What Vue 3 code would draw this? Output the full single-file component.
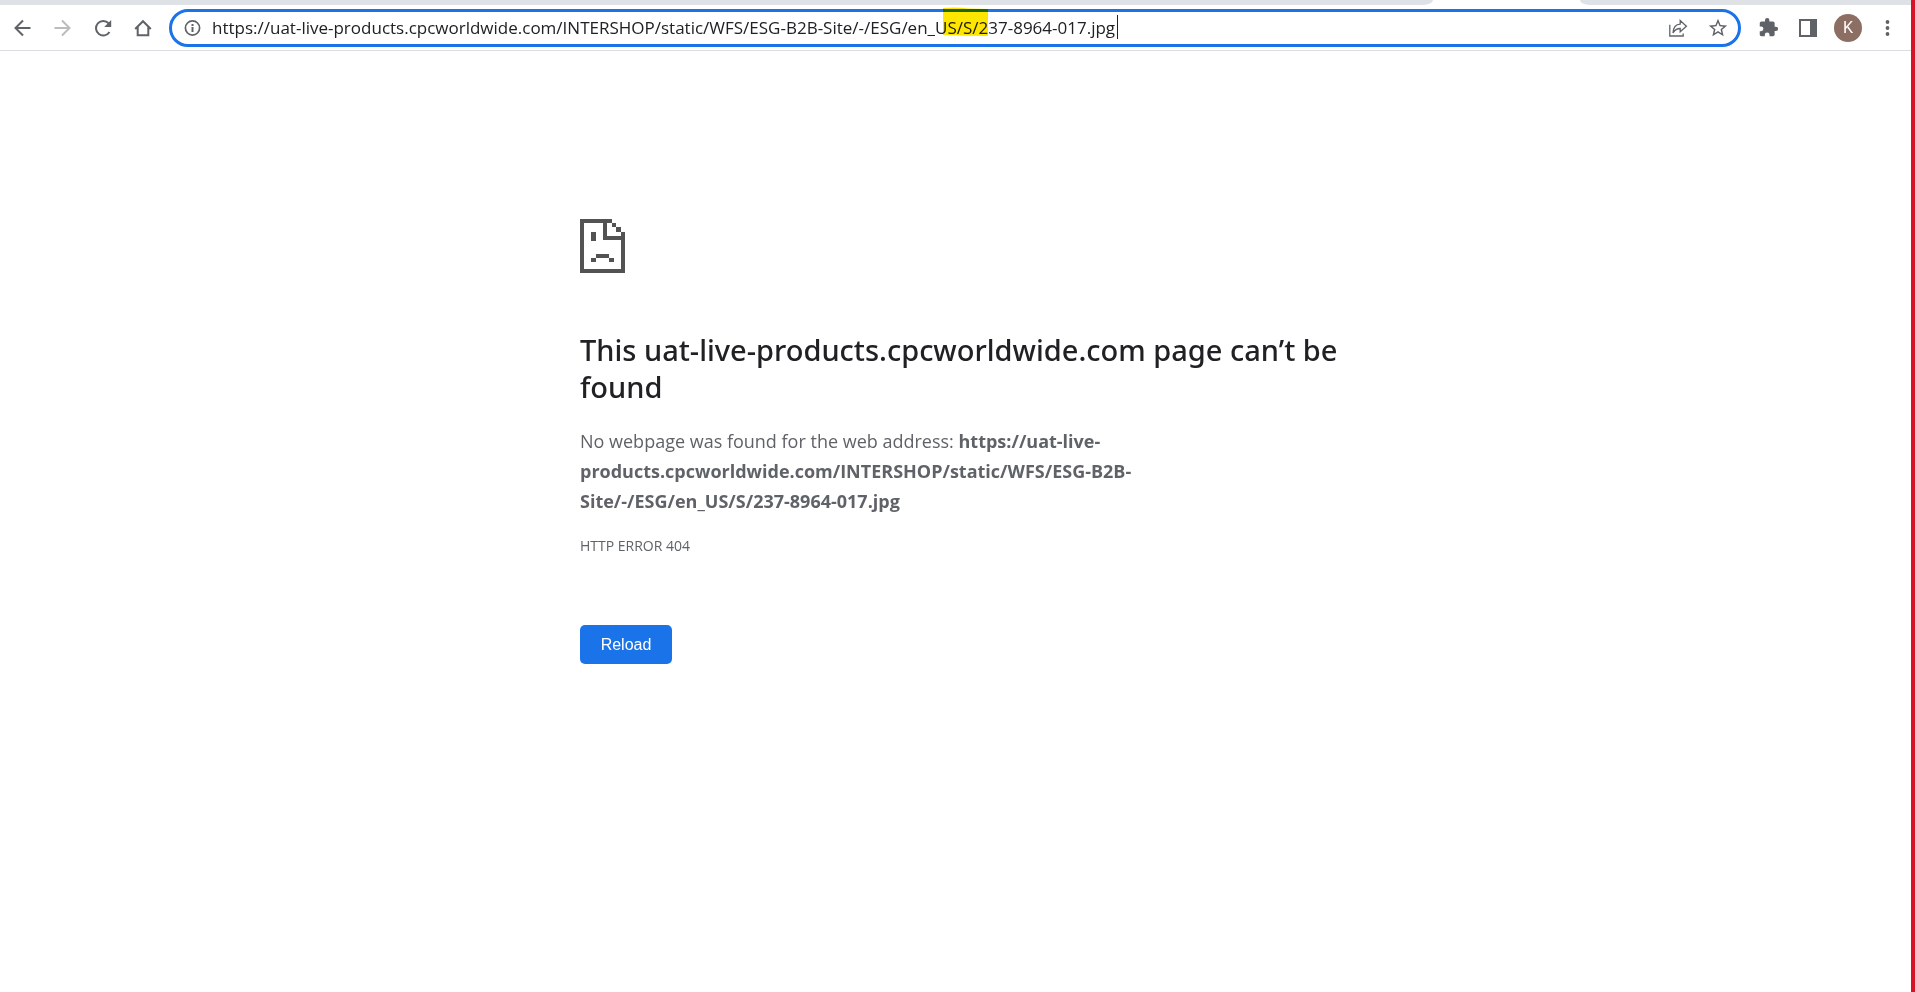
<script setup>
import { ref } from 'vue'

const address = ref('https://uat-live-products.cpcworldwide.com/INTERSHOP/static/WFS/ESG-B2B-Site/-/ESG/en_US/S/237-8964-017.jpg')
</script>

<template>
  <div class="window">
    <div class="tab-strip">
      <div class="tabs-before"></div>
      <div class="tabs-after"></div>
    </div>

    <header class="toolbar">
      <nav class="nav-buttons" aria-label="Navigation">
        <button type="button" aria-label="Back">
          <svg viewBox="0 0 24 24" width="24" height="24"><path d="M19.500 12H5M12 4.500L4.500 12L12 19.500" fill="none" stroke="#5f6368" stroke-width="2" /></svg>
        </button>
        <button type="button" aria-label="Forward" disabled>
          <svg viewBox="0 0 24 24" width="24" height="24"><path d="M3.500 12H18M11 4.500L18.500 12L11 19.500" fill="none" stroke="#babcbe" stroke-width="2" /></svg>
        </button>
        <button type="button" aria-label="Reload page">
          <svg viewBox="0 0 24 24" width="24" height="24"><path d="M18.5 16A7.3 7.3 0 1 1 17.6 7.2" fill="none" stroke="#5f6368" stroke-width="2" /><path d="M20.2 4V11H13.2Z" fill="#5f6368" /></svg>
        </button>
        <button type="button" aria-label="Home">
          <svg viewBox="0 0 24 24" width="24" height="24"><path d="M4.2 13L12 5.2L19.8 13M6.7 11V19.2H17.3V11" fill="none" stroke="#5f6368" stroke-width="2" /></svg>
        </button>
      </nav>

      <div class="omnibox">
        <svg class="info" viewBox="0 0 18 18" width="18" height="18"><circle cx="8.500" cy="9" r="7.100" fill="none" stroke="#5f6368" stroke-width="1.700" /><path d="M7.500 8h2v5h-2zM7.500 5h2v2h-2z" fill="#5f6368" /></svg>
        <div class="address">
          <input v-model="address" type="text" aria-label="Address" spellcheck="false" />
          <svg class="marker" viewBox="0 0 45 30" width="45" height="30"><path d="M0 1Q14 0 25 1.5L45 2V29Q22 29 0 28Z" fill="#ffe600" /></svg>
          <span class="caret"></span>
        </div>
        <button type="button" aria-label="Share">
          <svg viewBox="0 0 24 24" width="24" height="24"><path d="M3.8 8.8V20H17.2V17.5M7 17C7.3 11.5 10 8.4 14.2 8.2V4.6L20.4 10.3L14.2 15.8V12.5C11 12.4 8.8 14 7 17Z" fill="none" stroke="#5f6368" stroke-width="1.3" /></svg>
        </button>
        <button type="button" aria-label="Bookmark">
          <svg viewBox="0 0 24 24" width="22" height="22"><path d="M22 9.24l-7.19-.62L12 2 9.19 8.63 2 9.24l5.46 4.73L5.82 21 12 17.27 18.18 21l-1.63-7.03L22 9.24zM12 15.4l-3.76 2.27 1-4.28-3.32-2.88 4.38-.38L12 6.1l1.71 4.04 4.38.38-3.32 2.88 1 4.28L12 15.4z" fill="#5f6368" /></svg>
        </button>
      </div>

      <div class="actions">
        <button type="button" aria-label="Extensions">
          <svg viewBox="0 0 24 24" width="21" height="21"><path d="M20.5 11H19V7c0-1.1-.9-2-2-2h-4V3.5a2.5 2.5 0 0 0-5 0V5H4c-1.1 0-2 .9-2 2v3.8h1.5a2.7 2.7 0 0 1 0 5.4H2V20c0 1.1.9 2 2 2h3.8v-1.5a2.7 2.7 0 0 1 5.4 0V22H17c1.1 0 2-.9 2-2v-4h1.5a2.5 2.5 0 0 0 0-5z" fill="#5f6368" /></svg>
        </button>
        <button type="button" aria-label="Side panel">
          <svg viewBox="0 0 18 18" width="18" height="18"><path d="M0 0H18V18H0ZM2 2V16H11V2Z" fill="#5f6368" fill-rule="evenodd" /></svg>
        </button>
        <button type="button" aria-label="Profile"><span class="avatar">K</span></button>
        <button type="button" aria-label="Menu">
          <svg viewBox="0 0 18 18" width="18" height="18"><g fill="#5f6368"><circle cx="8.5" cy="3" r="1.9" /><circle cx="8.5" cy="9" r="1.9" /><circle cx="8.5" cy="15" r="1.9" /></g></svg>
        </button>
      </div>
    </header>

    <main class="error-page">
      <svg class="sad-page" viewBox="0 0 45 55" width="45" height="55" shape-rendering="crispEdges">
        <path d="M0 1H32V5H27V18H41V14H45V55H0ZM4 5V51H41V22H23V5Z" fill="#535353" fill-rule="evenodd" />
        <path d="M32 5H36V9H32ZM36 9H41V14H36ZM11 14H16V23H11ZM16 36H29V40H16ZM11 40H16V44H11ZM29 40H34V44H29Z" fill="#535353" />
      </svg>
      <h1>This uat-live-products.cpcworldwide.com page can’t be found</h1>
      <p class="summary">No webpage was found for the web address: <strong>https://uat-live-products.cpcworldwide.com/INTERSHOP/static/WFS/ESG-B2B-Site/-/ESG/en_US/S/237-8964-017.jpg</strong></p>
      <p class="code">HTTP ERROR 404</p>
      <button class="reload" type="button">Reload</button>
    </main>
  </div>
</template>

<style>
body {
  margin: 0;
  background: #fff;
}
</style>

<style scoped>
.window {
  box-sizing: border-box;
  min-height: 100vh;
  border-right: 4px solid #d71326;
  background: #fff;
  font-family: "Open Sans", "Noto Sans", sans-serif;
}
.tab-strip {
  display: flex;
  justify-content: space-between;
  height: 5px;
}
.tabs-before {
  width: 75%;
  background: #dee1e6;
  border-bottom-right-radius: 10px 5px;
}
.tabs-after {
  width: 331px;
  background: #dee1e6;
  border-bottom-left-radius: 10px 5px;
}
.toolbar {
  display: flex;
  align-items: center;
  box-sizing: border-box;
  height: 46px;
  padding: 0 3px;
  border-bottom: 1px solid #dadce0;
}
button {
  display: flex;
  align-items: center;
  justify-content: center;
  width: 40px;
  height: 40px;
  padding: 0;
  border: 0;
  background: none;
}
.nav-buttons,
.actions {
  display: flex;
}
.omnibox {
  display: flex;
  flex: 1;
  align-items: center;
  box-sizing: border-box;
  height: 38px;
  margin: 0 7px 0 6px;
  padding: 0 0 0 12px;
  border: 3px solid #1a73e8;
  border-radius: 19px;
}
.info {
  margin-right: 10px;
}
.address {
  position: relative;
  flex: 1;
}
input {
  display: block;
  width: 100%;
  height: 30px;
  padding: 0;
  border: 0;
  outline: 0;
  background: none;
  color: #202124;
  font: 17px/30px "Open Sans", "Noto Sans", sans-serif;
}
.marker {
  position: absolute;
  top: -6px;
  left: 731px;
  mix-blend-mode: multiply;
}
.caret {
  position: absolute;
  top: 2px;
  left: 905px;
  width: 1px;
  height: 24px;
  background: #202124;
}
.avatar {
  width: 28px;
  height: 28px;
  border-radius: 50%;
  background: #8d6e63;
  color: #fff;
  font: 16px/28px Roboto, sans-serif;
}
.error-page {
  max-width: 751px;
  margin: 0 auto;
  padding-top: 167px;
  color: #5f6368;
}
.sad-page {
  display: block;
}
h1 {
  margin: 58px -16px 21px 0;
  color: #202124;
  font-family: "Noto Sans", "Open Sans", sans-serif;
  font-size: 29px;
  font-weight: 500;
  line-height: 37px;
}
.summary {
  max-width: 580px;
  margin: 0;
  font-size: 18px;
  line-height: 30px;
}
.code {
  margin: 15px 0 0;
  font-size: 14px;
  line-height: 30px;
}
.reload {
  width: 92px;
  height: 39px;
  margin-top: 64px;
  border-radius: 5px;
  background: #1a73e8;
  color: #fff;
  font: 16px "Liberation Sans", sans-serif;
}
</style>
